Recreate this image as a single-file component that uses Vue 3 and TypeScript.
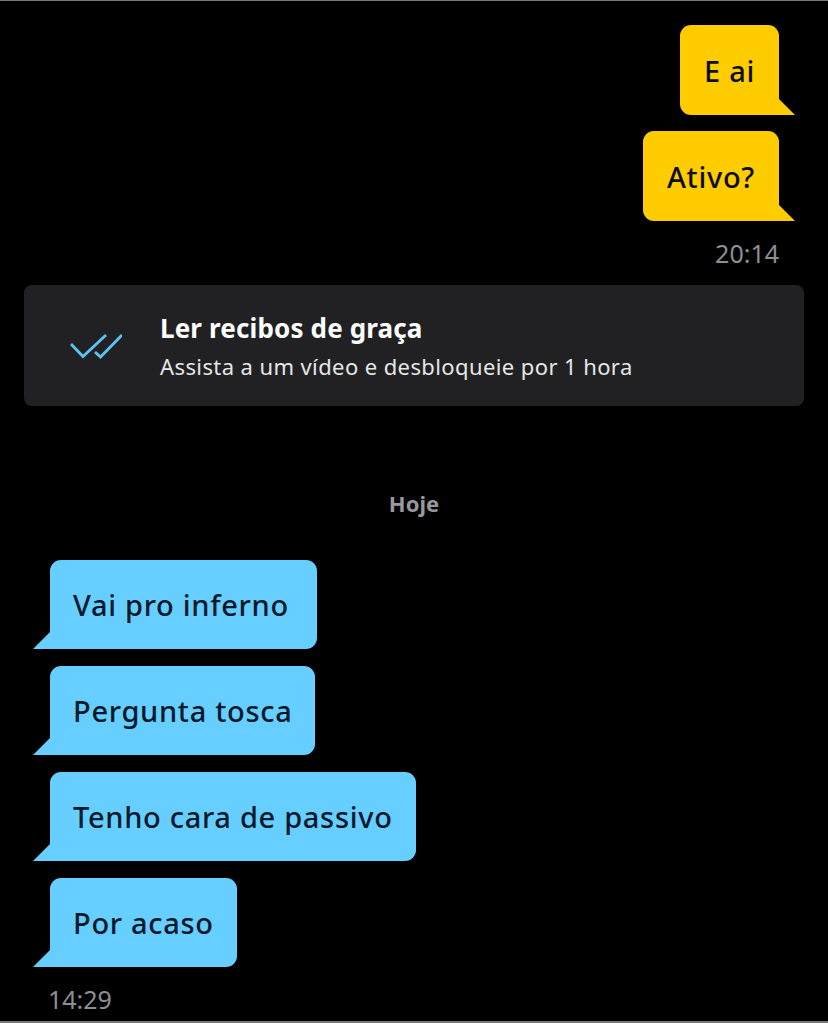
<template>
  <div class="chat">
    <div class="group sent">
      <div v-for="m in sent" :key="m" class="bubble out">{{ m }}</div>
      <div class="time time-out">20:14</div>
    </div>

    <div class="banner">
      <svg class="checks" width="52" height="28" viewBox="0 0 52 28" fill="none" stroke="#5cc4f2" stroke-width="2.8">
        <path d="M1 12 13 24.500 36 3" />
        <path d="M25 20 30.500 25 52 3" />
      </svg>
      <div class="banner-text">
        <div class="banner-title">Ler recibos de graça</div>
        <div class="banner-sub">Assista a um vídeo e desbloqueie por 1 hora</div>
      </div>
    </div>

    <div class="day">Hoje</div>

    <div class="group received">
      <div v-for="m in received" :key="m" class="bubble in">{{ m }}</div>
      <div class="time time-in">14:29</div>
    </div>
  </div>
</template>

<script setup lang="ts">
const sent: string[] = ["E ai", "Ativo?"];
const received: string[] = [
  "Vai pro inferno\u2006",
  "Pergunta tosca",
  "Tenho cara de passivo",
  "Por acaso",
];
</script>

<style>
html,
body {
  margin: 0;
  background: #000;
}
</style>

<style scoped>
.chat {
  box-sizing: border-box;
  width: 828px;
  height: 1023px;
  overflow: hidden;
  padding-top: 25px;
  background: #000;
  border-top: 1px solid #77777a;
  border-bottom: 2px solid #77777a;
  font-family: "Noto Sans", "Open Sans", sans-serif;
  display: flex;
  flex-direction: column;
}
.group {
  display: flex;
  flex-direction: column;
  gap: 16px;
}
.sent {
  align-items: flex-end;
  padding-right: 49px;
  margin-top: -1px;
}
.received {
  align-items: flex-start;
  padding-left: 50px;
  gap: 17px;
}
.bubble {
  position: relative;
  box-sizing: border-box;
  height: 90px;
  display: flex;
  align-items: center;
  padding: 0 24px;
  font-size: 29px;
  font-weight: 500;
  letter-spacing: 0.7px;
  color: #0d0d0d;
  border-radius: 11px;
  white-space: pre;
}
.out {
  background: #ffcc00;
  border-bottom-right-radius: 0;
}
.in {
  height: 89px;
  padding: 0 23px;
  background: #66cfff;
  color: #03192b;
  border-bottom-left-radius: 0;
}
.bubble::after {
  content: "";
  position: absolute;
  bottom: 0;
  width: 17px;
  height: 17px;
  background: inherit;
}
.out::after {
  right: -16px;
  clip-path: polygon(0 0, 100% 100%, 0 100%);
}
.in::after {
  left: -17px;
  clip-path: polygon(100% 0, 100% 100%, 0 100%);
}
.time {
  font-size: 25px;
  line-height: 32px;
  color: #8e8e93;
}
.time-out {
  margin-top: 0;
}
.time-in {
  margin: -1px 0 0 -2px;
}
.banner {
  box-sizing: border-box;
  width: 780px;
  height: 121px;
  margin: 16px 0 0 24px;
  padding-left: 46px;
  display: flex;
  align-items: center;
  gap: 38px;
  background: #212123;
  border-radius: 8px;
}
.banner-text {
  color: #fff;
  padding-top: 2px;
}
.banner-title {
  font-size: 26px;
  font-weight: 700;
  letter-spacing: 0.15px;
  line-height: 32px;
  margin-top: -2px;
}
.banner-sub {
  margin-top: 8px;
  font-size: 22px;
  letter-spacing: 0.4px;
  line-height: 28px;
  color: #e6e6e8;
}
.day {
  margin: 82px 0 42px;
  text-align: center;
  font-size: 22px;
  line-height: 30px;
  font-weight: 700;
  color: #98989e;
}
</style>
